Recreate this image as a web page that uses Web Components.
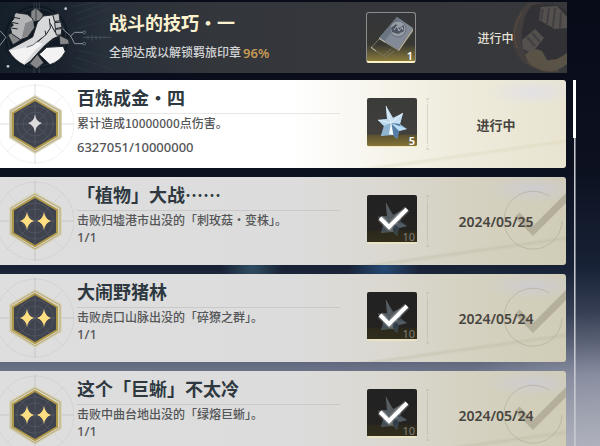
<!DOCTYPE html>
<html lang="zh-CN">
<head>
<meta charset="utf-8">
<meta name="viewport" content="width=device-width, initial-scale=1">
<title>战斗的技巧·一</title>
<style>
  html {
    height: 100%;
  }
  body {
    margin: 0;
    height: 100%;
    overflow: hidden;
    font-family: "Noto Sans", "Noto Sans CJK SC", sans-serif;
    background:
      radial-gradient(circle at 64% 60%, rgba(40, 82, 130, 0.8), transparent 36px),
      radial-gradient(circle at 42% 60%, rgba(70, 120, 140, 0.5), transparent 30px),
      radial-gradient(circle at 100% 108%, rgba(196, 198, 206, 0.75), transparent 170px),
      linear-gradient(#080b18 0%, #0c1120 38%, #182236 60%, #4b5369 77%, #70778d 84%, #8f94a3 100%);
  }
</style>
</head>
<body>
<achievement-page>
  <chapter-banner slot="banner">
    <span slot="title">战斗的技巧·一</span>
    <span slot="text">全部达成以解锁羁旅印章</span>
    <span slot="percent">96%</span>
    <reward-item slot="reward" kind="stamp">1</reward-item>
    <span slot="status">进行中</span>
  </chapter-banner>
  <achievement-row stars="1">
    <span slot="title">百炼成金·四</span>
    <span slot="text">累计造成10000000点伤害。</span>
    <span slot="progress">6327051/10000000</span>
    <reward-item slot="reward" kind="star">5</reward-item>
    <span slot="status">进行中</span>
  </achievement-row>
  <achievement-row stars="2" done>
    <span slot="title">「植物」大战⋯⋯</span>
    <span slot="text">击败归墟港市出没的「刺玫菇·变株」。</span>
    <span slot="progress">1/1</span>
    <reward-item slot="reward" kind="star" done>10</reward-item>
    <time slot="status" datetime="2024-05-25">2024/05/25</time>
  </achievement-row>
  <achievement-row stars="2" done>
    <span slot="title">大闹野猪林</span>
    <span slot="text">击败虎口山脉出没的「碎獠之群」。</span>
    <span slot="progress">1/1</span>
    <reward-item slot="reward" kind="star" done>10</reward-item>
    <time slot="status" datetime="2024-05-24">2024/05/24</time>
  </achievement-row>
  <achievement-row stars="2" done>
    <span slot="title">这个「巨蜥」不太冷</span>
    <span slot="text">击败中曲台地出没的「绿熔巨蜥」。</span>
    <span slot="progress">1/1</span>
    <reward-item slot="reward" kind="star" done>10</reward-item>
    <time slot="status" datetime="2024-05-24">2024/05/24</time>
  </achievement-row>
</achievement-page>

<script>
class AchievementPage extends HTMLElement {
  constructor() {
    super();
    const shadow = this.attachShadow({ mode: "open" });
    shadow.innerHTML = `
      <style>
        :host {
          display: flex;
          flex-direction: column;
          gap: 7px;
          height: 100%;
          padding: 2px 33px 0 0;
          box-sizing: border-box;
        }
        .body {
          display: flex;
          flex: 1;
          min-height: 0;
          gap: 6px;
          margin-right: -9px;
        }
        .list {
          display: flex;
          flex: 1;
          flex-direction: column;
          gap: 9px;
          min-width: 0;
        }
        .bar {
          width: 3px;
          background: linear-gradient(90deg, transparent 1px, #b4b7bf 1px, #d5d7dc 2px, transparent 3px);
        }
        .thumb {
          height: 58px;
          background: #fff;
        }
      </style>
      <slot name="banner"></slot>
      <div class="body">
        <div class="list"><slot></slot></div>
        <div class="bar"><div class="thumb"></div></div>
      </div>
    `;
  }
}

class ChapterBanner extends HTMLElement {
  constructor() {
    super();
    const shadow = this.attachShadow({ mode: "open" });
    shadow.innerHTML = `
      <style>
        :host {
          display: grid;
          grid-template-columns: 109px minmax(0, 1fr) 50px 151px;
          align-items: center;
          height: 71px;
          flex: none;
          position: relative;
          overflow: hidden;
          background: linear-gradient(90deg, #151f2a 0, #1b242e 60px, #28303a 105px, #33363b 210px, #37383b 100%);
        }
        .emblem {
          width: 112px;
          height: 71px;
        }
        .swirl {
          position: absolute;
          top: 0;
          right: 0;
          width: 60px;
          height: 71px;
          opacity: 0.8;
        }
        h1 {
          margin: 0;
          font-family: "Noto Sans CJK SC", sans-serif;
          font-size: 18px;
          line-height: 26px;
          font-weight: 700;
          color: #fcf2cf;
        }
        p {
          display: flex;
          align-items: center;
          gap: 2px;
          margin: 4px 0 0;
          font-size: 12px;
          line-height: 28px;
          white-space: nowrap;
          font-weight: 500;
          color: #d3d4d5;
        }
        .percent {
          font-size: 13px;
          font-weight: 600;
          color: #c59a55;
        }
        .status {
          position: relative;
          padding-left: 8px;
          font-size: 12px;
          font-weight: 500;
          text-align: center;
          color: #e6e1d6;
        }
      </style>
      <svg class="emblem" viewBox="0 6 336 213" aria-hidden="true">
        <circle cx="110" cy="112" r="96" fill="#0c151f" opacity=".65"/>
        <g fill="none" stroke="#303b45" stroke-width="2">
          <circle cx="110" cy="112" r="113" stroke-dasharray="2 7"/>
          <circle cx="110" cy="112" r="87"/>
          <path d="M102 8V50M110 8V50M118 8V50M102 190V219M118 190V219" stroke="#46515b"/>
          <path d="M215 20L290 6M225 42L330 6M230 62L336 22M232 84L336 58M232 150L336 174M226 172L336 208M214 196L280 219"/>
        </g>
        <path d="M250 112H334M264 106V118M276 104V122M288 106V120M300 108V118M312 109V116" stroke="#46515b" stroke-width="3"/>
        <path d="M176 70Q194 96 212 108L224 97H250M212 108L224 131H250M0 92L18 112L0 136" fill="none" stroke="#8b949b" stroke-width="3"/>
        <g fill="#17212b" stroke="#8b949b" stroke-width="2"><circle cx="253" cy="97" r="4"/><circle cx="253" cy="131" r="4"/></g>
        <g fill="#858789" stroke="#1b2026" stroke-width="2">
          <path d="M93 34L108 23L129 43L124 62L92 64Z"/>
          <path d="M108 23V60"/>
          <path d="M24 105L40 95L62 120L39 134Z"/>
          <path d="M89 191L112 163L131 188L110 206Z"/>
          <path d="M178 106L205 119L208 132L180 134Z"/>
        </g>
        <g stroke="#20252b" stroke-width="3" stroke-linejoin="round">
          <path fill="#b4b5b7" d="M43 44L48 38L82 43L98 56L103 83L83 111L61 119L35 101L31 82L40 76L33 66L41 58Z"/>
          <path fill="#85878a" stroke="none" d="M76 70L100 60L101 84L82 109L65 113Z"/>
          <path fill="none" d="M41 52L60 56M34 67L55 71M34 84L53 87"/>
          <path fill="#f3f3f4" d="M117 163L140 142L190 139L196 155Q181 184 150 194Z"/>
          <path fill="#d7d8d9" d="M112 68L130 48L154 45L175 40L181 66L186 78L185 94L177 108L159 116L137 134L115 157L91 184L73 196Q42 181 24 150L40 142L98 111Z"/>
          <path fill="#bfc0c2" d="M158 44L177 40L180 62L164 65ZM164 68L183 66L186 82L166 86ZM165 88L186 86L183 105L169 105Z"/>
          <path fill="none" d="M148 56L151 84L138 104L102 135M151 70L166 98M138 104L135 92M123 158L154 124L175 113"/>
          <path fill="#f3f3f4" stroke="none" d="M29 152L90 139L110 126L128 132L105 151L72 191Q48 181 29 152Z"/>
          <path fill="none" stroke-width="2" d="M80 142L99 135L126 113"/>
        </g>
        <g fill="#c9cdd0"><circle cx="197" cy="26" r="4"/><circle cx="24" cy="199" r="4"/></g>
      </svg>
      <div>
        <h1><slot name="title"></slot></h1>
        <p><slot name="text"></slot><span class="percent"><slot name="percent"></slot></span></p>
      </div>
      <slot name="reward"></slot>
      <svg class="swirl" viewBox="0 0 60 71" aria-hidden="true">
        <path d="M22 0Q2 16 6 43Q12 66 42 71Q14 56 14 36Q15 14 39 1Z" fill="#46403e"/>
        <path d="M24 4Q35 -1 52 4L60 9V60L42 62Q20 50 15 31Q16 14 24 4Z" fill="#323135"/>
        <path d="M34 5L50 4L60 15V26L48 27L32 18ZM15 38L28 27L37 36L25 51L16 47Z" fill="#5b5652"/>
        <path d="M36 7L34 18M42 6L40 22M48 6L46 25M54 10L53 26M20 35L28 44M25 31L33 40" stroke="#444144" stroke-width="2"/>
        <path d="M18 53Q26 44 35 49L40 58Q48 60 60 51V62Q50 71 37 69Q22 65 18 53Z" fill="#625a4b"/>
        <path d="M24 54Q34 49 32 62M38 65Q42 53 55 61" stroke="#6a5b44" fill="none"/>
        <path d="M15 10Q3 28 10 46M20 60Q34 71 52 69" stroke="#65513f" fill="none"/>
      </svg>
      <div class="status"><slot name="status"></slot></div>
    `;
  }
}

class AchievementRow extends HTMLElement {
  constructor() {
    super();
    const shadow = this.attachShadow({ mode: "open" });
    shadow.innerHTML = `
      <style>
        :host {
          display: grid;
          grid-template-columns: 77px minmax(0, 1fr) 50px 149px;
          height: 88px;
          margin-right: 1px;
          flex: none;
          position: relative;
          overflow: hidden;
          border-radius: 0 3px 3px 0;
          background:
            linear-gradient(172deg, transparent 76%, rgba(205, 200, 165, 0.25) 78%, transparent 81%) right / 250px 100% no-repeat,
            radial-gradient(ellipse 50px 14px at 60% 30%, rgba(222, 220, 240, 0.6), transparent) right top / 80px 40px no-repeat,
            linear-gradient(90deg, #fff 0, #fff 52%, #f6f4ea 68%, #eeebdc 82%, #e8e4d0 100%);
        }
        :host([done]) {
          background:
            linear-gradient(172deg, transparent 76%, rgba(180, 175, 150, 0.3) 78%, transparent 81%) right / 250px 100% no-repeat,
            radial-gradient(ellipse 50px 14px at 60% 30%, rgba(205, 203, 218, 0.7), transparent) right top / 80px 40px no-repeat,
            linear-gradient(90deg, #dedede 0, #dcdcdc 52%, #dad8d0 68%, #d5d2c2 82%, #d0ccb6 100%);
        }
        .medal {
          width: 74px;
          height: 88px;
        }
        .one, .two, .watermark {
          display: none;
        }
        :host([stars="1"]) .one,
        :host([stars="2"]) .two,
        :host([done]) .watermark {
          display: block;
        }
        .info {
          white-space: nowrap;
        }
        h2 {
          margin: 4px 27px 0 0;
          padding-bottom: 3px;
          border-bottom: 1px solid rgba(90, 90, 90, 0.14);
          font-family: "Noto Sans CJK SC", sans-serif;
          font-size: 18px;
          line-height: 26px;
          font-weight: 700;
          color: #2e3840;
        }
        p {
          margin: 0;
          line-height: 18px;
          font-size: 12px;
          font-weight: 500;
          color: #555658;
        }
        .text {
          font-family: "Noto Sans CJK SC", sans-serif;
        }
        .progress {
          padding-top: 6px;
          font-size: 13px;
        }
        :host([done]) .progress {
          padding-top: 0;
          line-height: 16px;
        }
        ::slotted([slot="reward"]) {
          margin-top: 18px;
        }
        .status {
          display: flex;
          align-items: center;
          justify-content: center;
          position: relative;
          padding-left: 9px;
          font-size: 13px;
          font-weight: 700;
          color: #484540;
        }
        :host([done]) .status {
          font-size: 14px;
          font-weight: 600;
        }
        .divider {
          position: absolute;
          left: 8px;
          top: 18px;
          width: 5px;
          height: 52px;
        }
        .watermark {
          position: absolute;
          top: 12px;
          right: 0;
          width: 64px;
          height: 64px;
        }
      </style>
      <svg class="medal" viewBox="0 0 74 88" aria-hidden="true">
        <g fill="none" stroke="#8d8f96" stroke-opacity=".12">
          <circle cx="35" cy="44" r="39"/>
          <path d="M7 16L63 72M63 16L7 72"/>
          <path d="M35 4V84M0 44H74" stroke-opacity=".3"/>
        </g>
        <path d="M35 15L62 30V58L35 74L9 58V30Z" fill="#d9d4bd"/>
        <path d="M35 17L60 31V57L35 72L11 57V31Z" fill="none" stroke="#b5a979"/>
        <path d="M35 20L57 33V56L35 69L13 56V33Z" fill="#3f434e" stroke="#ae9647" stroke-width="2"/>
        <g fill="none" stroke="#747885" stroke-opacity=".3">
          <circle cx="35" cy="44" r="18"/>
          <circle cx="35" cy="44" r="12"/>
          <path d="M35 21V68M15 44H55M19 28L51 60M51 28L19 60"/>
        </g>
        <path class="one" fill="#dcdadb" d="M35 34Q36 42 42 43Q36 45 35 53Q34 45 28 43Q34 42 35 34Z"/>
        <g class="two" fill="#ffde81">
          <path d="M27 35Q28 42 34 44Q28 46 27 53Q26 46 20 44Q26 42 27 35Z"/>
          <path d="M44 35Q45 42 51 44Q45 46 44 53Q43 46 37 44Q43 42 44 35Z"/>
        </g>
      </svg>
      <div class="info">
        <h2><slot name="title"></slot></h2>
        <p class="text"><slot name="text"></slot></p>
        <p class="progress"><slot name="progress"></slot></p>
      </div>
      <slot name="reward"></slot>
      <svg class="watermark" viewBox="0 0 64 64" aria-hidden="true">
        <path d="M47 7A29 29 0 1 0 60 32" fill="none" stroke="#aaa792" stroke-opacity=".55"/>
        <path d="M15 26L31 42L68 5" fill="none" stroke="#97927e" stroke-opacity=".5" stroke-width="7"/>
      </svg>
      <div class="status">
        <svg class="divider" viewBox="0 0 5 52" aria-hidden="true">
          <rect x="2" y="6" width="1" height="40" fill="#a09c8c" fill-opacity=".3"/>
          <path d="M1 1H4M2 4H3M2 48H3M1 51H4" stroke="#a09c8c" stroke-opacity=".5"/>
        </svg>
        <slot name="status"></slot>
      </div>
    `;
  }
}

class RewardItem extends HTMLElement {
  constructor() {
    super();
    const shadow = this.attachShadow({ mode: "open" });
    shadow.innerHTML = `
      <style>
        :host {
          display: flex;
          align-items: flex-end;
          justify-content: flex-end;
          position: relative;
          width: 50px;
          height: 49px;
          box-sizing: border-box;
          border-bottom: 1px solid #f3e9bd;
          border-radius: 2px;
          overflow: hidden;
          background: linear-gradient(#3b3b3a 0, #41403d 75%, #5b5330 78%, #857438 100%);
          color: #fff;
        }
        :host([kind="stamp"]) {
          height: 51px;
          border: 1px solid #8b8c8b;
          border-bottom: 2px solid #fff3c4;
          border-radius: 3px;
          background: linear-gradient(#35363a 0, #373732 65%, #8a7c3c 100%);
        }
        :host([done]) {
          border-bottom: 2px solid #e9e3c4;
          background: linear-gradient(#232223 0, #242321 75%, #2c291c 78%, #322e1d 100%);
          color: #807e78;
        }
        svg {
          display: none;
          position: absolute;
          inset: 0;
          width: 50px;
          height: 49px;
        }
        :host([kind="stamp"]) .stamp,
        :host([kind="star"]) .star,
        :host([done]) .check {
          display: block;
        }
        :host([done]) .star {
          opacity: 0.3;
        }
        .count {
          position: relative;
          padding-right: 2px;
          font-size: 11px;
          line-height: 11px;
          font-weight: 600;
        }
        :host([done]) .count {
          font-weight: 400;
        }
      </style>
      <svg class="stamp" viewBox="0 0 50 49" aria-hidden="true">
        <path d="M4 35L12 26M4 35L19 44L27 38M17 42L24 36" fill="none" stroke="#77745f"/>
        <path d="M12 25L30 4L46 15L31 37Z" fill="#828a97"/>
        <path d="M12 25L30 4L33 7L17 29Z" fill="#6b7582"/>
        <path d="M31 37L46 15L46 18L32 38L12 26V25Z" fill="#b1ac9b"/>
        <circle cx="31" cy="16" r="8" fill="#969ca4" stroke="#666d78"/>
        <path d="M24 15L29 11L32 15L37 12L37 18L31 21L25 19Z" fill="#4d5562"/>
        <path d="M27 17L30 13L32 18L35 14L36 17" fill="none" stroke="#a7afb6"/>
        <path d="M4 34L9 38M12 25L18 29" stroke="#c2c0b3"/>
      </svg>
      <svg class="star" viewBox="0 0 50 49" aria-hidden="true">
        <path d="M19 8L26 20L36 15L33 26L40 31L32 33L30 41L26 37L14 38L17 28L11 22L20 21Z" fill="#91b9dc"/>
        <path d="M19 8L26 20L24 25L20 21ZM36 15L33 26L24 25L26 20Z" fill="#c4def0"/>
        <path d="M24 25L33 26L32 33L30 41L26 37Z" fill="#537da6"/>
        <path d="M11 22L20 21L24 25L17 28Z" fill="#b9d9ef"/>
        <path d="M17 28L24 25L22 36L14 38Z" fill="#8fb4d0"/>
        <path d="M24 25L40 31L32 33Z" fill="#bcdff5"/>
        <path d="M24 25L26 37L22 36Z" fill="#f3fbff"/>
        <path d="M19 8L24 25L36 15M11 22L24 25L26 37" fill="none" stroke="#fff" stroke-opacity=".6"/>
      </svg>
      <svg class="check" viewBox="0 0 50 49" aria-hidden="true">
        <path d="M13 23L22 32L40 14" fill="none" stroke="#fff" stroke-opacity=".2" stroke-width="7" stroke-linejoin="round"/>
        <path d="M13 23L22 32L40 14" fill="none" stroke="#fff" stroke-width="4"/>
      </svg>
      <span class="count"><slot></slot></span>
    `;
  }
}

customElements.define("achievement-page", AchievementPage);
customElements.define("chapter-banner", ChapterBanner);
customElements.define("achievement-row", AchievementRow);
customElements.define("reward-item", RewardItem);
</script>
</body>
</html>
